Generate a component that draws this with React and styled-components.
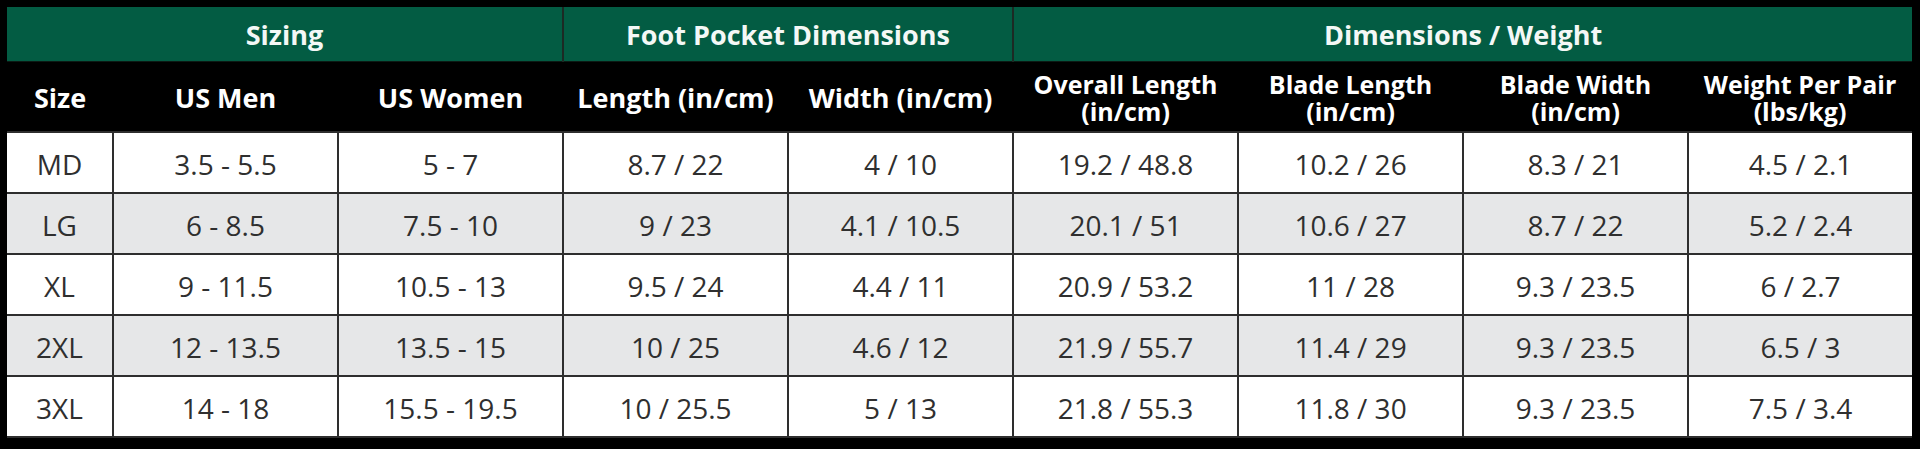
import styled, { createGlobalStyle } from "styled-components";

const GlobalStyle = createGlobalStyle`
  html, body {
    margin: 0;
    padding: 0;
    background: #000;
  }
  body {
    font-family: "Open Sans", "Liberation Sans", sans-serif;
  }
`;

// fin sizes
const rows = [
  ["MD", "3.5 - 5.5", "5 - 7", "8.7 / 22", "4 / 10", "19.2 / 48.8", "10.2 / 26", "8.3 / 21", "4.5 / 2.1"],
  ["LG", "6 - 8.5", "7.5 - 10", "9 / 23", "4.1 / 10.5", "20.1 / 51", "10.6 / 27", "8.7 / 22", "5.2 / 2.4"],
  ["XL", "9 - 11.5", "10.5 - 13", "9.5 / 24", "4.4 / 11", "20.9 / 53.2", "11 / 28", "9.3 / 23.5", "6 / 2.7"],
  ["2XL", "12 - 13.5", "13.5 - 15", "10 / 25", "4.6 / 12", "21.9 / 55.7", "11.4 / 29", "9.3 / 23.5", "6.5 / 3"],
  ["3XL", "14 - 18", "15.5 - 19.5", "10 / 25.5", "5 / 13", "21.8 / 55.3", "11.8 / 30", "9.3 / 23.5", "7.5 / 3.4"],
];

const groups = [
  { label: "Sizing", span: 3 },
  { label: "Foot Pocket Dimensions", span: 2 },
  { label: "Dimensions / Weight", span: 4 },
];

const headings = [
  ["Size"],
  ["US Men"],
  ["US Women"],
  ["Length (in/cm)"],
  ["Width (in/cm)"],
  ["Overall Length", "(in/cm)"],
  ["Blade Length", "(in/cm)"],
  ["Blade Width", "(in/cm)"],
  ["Weight Per Pair", "(lbs/kg)"],
];

const colWidths = [106, 225, 225, 225, 225, 225, 225, 225, 224];

const Frame = styled.div`
  background: #000;
  width: 1920px;
  height: 449px;
  box-sizing: border-box;
  padding: 7px 8px 0 7px;
  overflow: hidden;
`;

const Table = styled.table`
  width: 1905px;
  table-layout: fixed;
  border-collapse: collapse;
  border-spacing: 0;
`;

const GroupRow = styled.tr`
  height: 54px;
`;

const HeadRow = styled.tr`
  height: 71px;
`;

const GroupCell = styled.th`
  padding: 2px 0 0;
  background: #035c43;
  color: #f4f8f6;
  font-size: 27px;
  font-weight: 700;
  line-height: 34px;
  text-align: center;
  border-left: 2px solid #1c2a24;
  border-bottom: 1px solid #0c1a14;
  &:first-child {
    border-left: none;
  }
`;

const HeadCell = styled.th`
  padding: 3px 4px 0;
  background: #000;
  color: #fff;
  font-weight: 700;
  text-align: center;
  line-height: ${({ $stacked }) => ($stacked ? "27px" : "34px")};
  font-size: ${({ $stacked }) => ($stacked ? "25px" : "27px")};
`;

const BodyRow = styled.tr`
  height: 61px;
  background: ${({ $shaded }) => ($shaded ? "#e6e7e8" : "#fff")};
`;

const Cell = styled.td`
  padding: 3px 0 0;
  border: 2px solid #2e2e2e;
  color: #2f2f2f;
  font-size: 28px;
  font-weight: 400;
  line-height: 34px;
  text-align: center;
  &:first-child {
    border-left: none;
  }
  &:last-child {
    border-right: none;
  }
`;

export default function App() {
  return (
    <>
      <GlobalStyle />
      <Frame>
        <Table>
          <colgroup>
            {colWidths.map((w, i) => (
              <col key={i} style={{ width: w }} />
            ))}
          </colgroup>
          <thead>
            <GroupRow>
              {groups.map((g) => (
                <GroupCell key={g.label} colSpan={g.span}>
                  {g.label}
                </GroupCell>
              ))}
            </GroupRow>
            <HeadRow>
              {headings.map((h) => (
                <HeadCell key={h[0]} $stacked={h.length > 1}>
                  {h[0]}
                  {h[1] && (
                    <>
                      <br />
                      {h[1]}
                    </>
                  )}
                </HeadCell>
              ))}
            </HeadRow>
          </thead>
          <tbody>
            {rows.map((r, i) => (
              <BodyRow key={r[0]} $shaded={i % 2 === 1}>
                {r.map((v, j) => (
                  <Cell key={j}>{v}</Cell>
                ))}
              </BodyRow>
            ))}
          </tbody>
        </Table>
      </Frame>
    </>
  );
}
